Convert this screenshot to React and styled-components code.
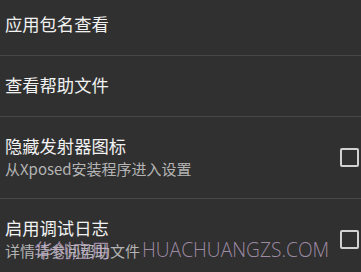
import React, { useState } from "react";
import styled, { createGlobalStyle } from "styled-components";

const GlobalStyle = createGlobalStyle`
  html, body {
    margin: 0;
    padding: 0;
    background: #303030;
    overflow: hidden;
  }
  body {
    font-family: "Noto Sans CJK SC", "Noto Sans", sans-serif;
  }
`;

const items = [
  { title: "应用包名查看" },
  { title: "查看帮助文件" },
  { title: "隐藏发射器图标", summary: "从Xposed安装程序进入设置", check: true },
  { title: "启用调试日志", summary: "详情请参阅帮助文件", check: true },
];

function App() {
  const [checked, setChecked] = useState({});
  return (
    <Screen>
      <GlobalStyle />
      <List>
        {items.map((item, i) => (
          <Item key={i} $tall={!!item.summary}>
            <Texts>
              <Title>{item.title}</Title>
              {item.summary ? <Summary>{item.summary}</Summary> : null}
            </Texts>
            {item.check ? (
              <CheckBox
                $on={!!checked[i]}
                onClick={() => setChecked({ ...checked, [i]: !checked[i] })}
              />
            ) : null}
          </Item>
        ))}
      </List>
      <Watermark>
        <WaterCn>华创应用</WaterCn>
        <WaterEn>HUACHUANGZS.COM</WaterEn>
      </Watermark>
    </Screen>
  );
}
export default App;

const Screen = styled.div`
  position: relative;
  width: 361px;
  height: 272px;
  overflow: hidden;
  background: #303030;
`;

const List = styled.div`
  display: flex;
  flex-direction: column;
  margin-top: -5px;
`;

const Item = styled.div`
  display: flex;
  align-items: center;
  justify-content: space-between;
  height: ${(p) => (p.$tall ? "81px" : "60px")};
  padding: 0 2px 0 5px;
  border-bottom: 1px solid #474747;
`;

const Texts = styled.div`
  display: flex;
  flex-direction: column;
  margin-top: -2px;
`;

const Title = styled.div`
  color: #f2f2f2;
  font-size: 17.3px;
  line-height: 22px;
`;

const Summary = styled.div`
  color: #b4b4b4;
  font-size: 15px;
  line-height: 20px;
  margin-top: 2px;
`;

const CheckBox = styled.div`
  width: 15px;
  height: 15px;
  border: 2px solid #d2d2d2;
  border-radius: 2px;
  background: ${(p) => (p.$on ? "#80cbc4" : "transparent")};
  cursor: pointer;
`;

const Watermark = styled.div`
  position: absolute;
  left: 34px;
  top: 238px;
  display: flex;
  align-items: center;
  gap: 32px;
  color: rgba(200, 175, 210, 0.72);
  pointer-events: none;
`;

const WaterCn = styled.span`
  font-family: "Noto Sans CJK SC", sans-serif;
  font-size: 19px;
  line-height: 24px;
`;

const WaterEn = styled.span`
  font-family: "Open Sans", sans-serif;
  font-weight: 300;
  font-size: 19.2px;
  line-height: 24px;
`;
